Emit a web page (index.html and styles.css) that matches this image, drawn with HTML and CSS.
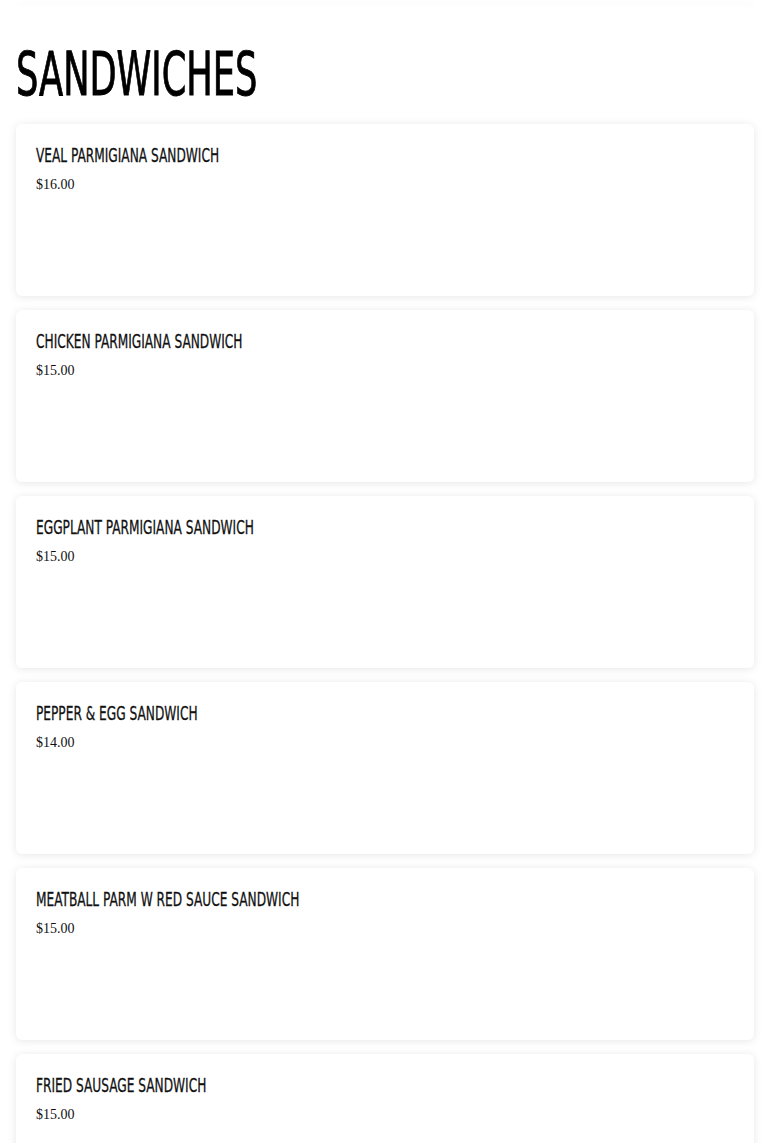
FILE: index.html
```html
<!DOCTYPE html>
<html>
<head>
<meta charset="utf-8">
<link rel="stylesheet" href="styles.css">
</head>
<body>
<div class="page">
  <div class="prev-card"></div>
  <h1 class="section-title"><span class="narrow">SANDWICHES</span></h1>
  <div class="items">
    <div class="card">
      <div class="item-name"><span class="narrow">VEAL PARMIGIANA SANDWICH</span></div>
      <div class="item-price">$16.00</div>
    </div>
    <div class="card">
      <div class="item-name"><span class="narrow">CHICKEN PARMIGIANA SANDWICH</span></div>
      <div class="item-price">$15.00</div>
    </div>
    <div class="card">
      <div class="item-name"><span class="narrow">EGGPLANT PARMIGIANA SANDWICH</span></div>
      <div class="item-price">$15.00</div>
    </div>
    <div class="card">
      <div class="item-name"><span class="narrow">PEPPER &amp; EGG SANDWICH</span></div>
      <div class="item-price">$14.00</div>
    </div>
    <div class="card">
      <div class="item-name"><span class="narrow">MEATBALL PARM W RED SAUCE SANDWICH</span></div>
      <div class="item-price">$15.00</div>
    </div>
    <div class="card">
      <div class="item-name"><span class="narrow">FRIED SAUSAGE SANDWICH</span></div>
      <div class="item-price">$15.00</div>
    </div>
  </div>
</div>
</body>
</html>
```

FILE: styles.css
```css
html, body {
  margin: 0;
  padding: 0;
  background: #ffffff;
}

.page {
  padding: 0 16px;
  overflow: hidden;
}

.prev-card {
  height: 1px;
  background: #fff;
  border-radius: 0 0 6px 6px;
  box-shadow: 0 2px 6px rgba(0, 0, 0, 0.08);
}

.narrow {
  display: inline-block;
  transform-origin: left center;
  white-space: nowrap;
}

.section-title {
  margin: 37px 0 14px;
  font-family: "DejaVu Sans Condensed", "Liberation Sans", sans-serif;
  font-weight: normal;
  font-size: 60px;
  line-height: 72px;
  color: #000;
  -webkit-text-stroke: 0.9px #000;
}

.section-title .narrow {
  transform: scaleX(0.652);
}

.items {
  display: flex;
  flex-direction: column;
  gap: 14px;
}

.card {
  height: 172px;
  box-sizing: border-box;
  padding: 20px;
  background: #fff;
  border-radius: 6px;
  box-shadow: 0 1px 8px rgba(0, 0, 0, 0.1);
}

.item-name {
  font-family: "DejaVu Sans Condensed", "Liberation Sans", sans-serif;
  font-size: 19.5px;
  line-height: 24px;
  color: #111;
  -webkit-text-stroke: 0.3px #111;
}

.item-name .narrow {
  transform: scaleX(0.694);
}

.item-price {
  margin-top: 7px;
  font-family: "Liberation Serif", "Times New Roman", serif;
  font-size: 14px;
  line-height: 20px;
  color: #111;
}
```
